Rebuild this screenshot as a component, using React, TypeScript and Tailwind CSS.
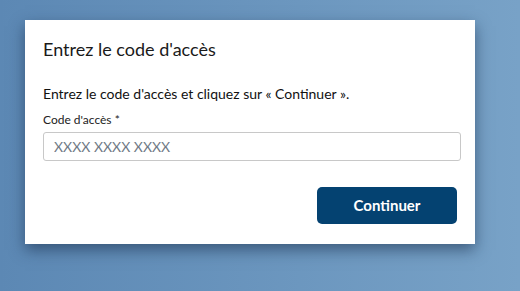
export default function App() {
  return (
    <div
      className="w-[520px] h-[291px] bg-gradient-to-r from-[#5c88b4] to-[#78a2c7] pt-[20px] pl-[25px]"
      style={{ fontFamily: "Lato, 'Noto Sans', sans-serif" }}
    >
      <div className="w-[450px] h-[224px] bg-white shadow-[0_6px_14px_rgba(20,40,70,0.55)] pl-[18px] pr-[14px] pt-[17px]">
        <h2 className="text-[18px] leading-[24px] text-[#1a1a1a]">Entrez le code d'accès</h2>
        <p className="mt-[24px] text-[14px] leading-[18px] text-[#111]">
          Entrez le code d'accès et cliquez sur « Continuer ».
        </p>
        <label className="block mt-[9px] text-[12px] leading-[16px] text-[#222]">Code d'accès *</label>
        <input
          className="mt-[4px] w-[418px] h-[29px] border border-[#c8c8c8] rounded-[3px] px-[10px] text-[14px] outline-none placeholder:text-[#707a86]"
          placeholder="XXXX XXXX XXXX"
        />
        <div className="flex justify-end pr-[4px] mt-[26px]">
          <button className="w-[140px] h-[37px] rounded-[5px] bg-[#044271] text-white font-bold text-[15px]">
            Continuer
          </button>
        </div>
      </div>
    </div>
  );
}
